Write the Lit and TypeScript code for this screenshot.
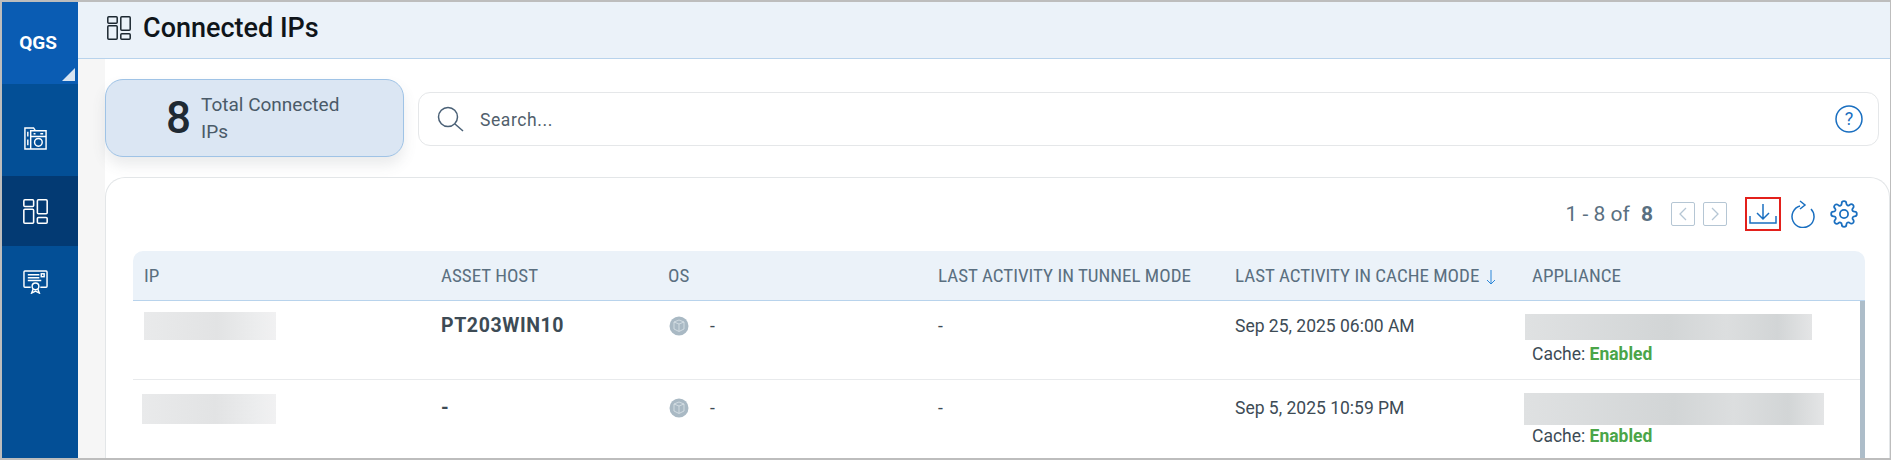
import { LitElement, html, css, svg } from 'lit';
import { customElement } from 'lit/decorators.js';

const dashIcon = svg`
  <rect x="0.8" y="0.8" width="9.4" height="6.4" rx="1" />
  <rect x="0.8" y="9.8" width="9.4" height="13.4" rx="1" />
  <rect x="13.8" y="0.8" width="9.4" height="13.4" rx="1" />
  <rect x="13.8" y="17.8" width="9.4" height="5.4" rx="1" />
`;

const rows = [
  { pad: 13, ipW: 132, ipL: 0, ipH: 28, host: 'PT203WIN10', date: 'Sep 25, 2025 06:00 AM', appW: 287, appL: 0, appH: 26, appT: 0, cacheT: 2 },
  { pad: 16, ipW: 134, ipL: -2, ipH: 30, host: '-', date: 'Sep 5, 2025 10:59 PM', appW: 300, appL: -1, appH: 32, appT: -3, cacheT: -1 },
];

@customElement('app-root')
export class AppRoot extends LitElement {
  static styles = css`
    :host {
      display: block;
      width: 1891px;
      height: 460px;
      font-family: Roboto, 'Liberation Sans', sans-serif;
      color: #3d4b55;
    }

    .frame {
      box-sizing: border-box;
      width: 100%;
      height: 100%;
      display: flex;
      overflow: hidden;
      border: solid #bdbdbd;
      border-width: 2px 1px 2px 2px;
      background: #fff;
    }

    .side {
      flex: 0 0 76px;
      background: #034f96;
      display: flex;
      flex-direction: column;
    }

    .brand {
      position: relative;
      height: 82px;
      background: #0a5cb3;
      color: #fff;
      font-weight: 700;
      font-size: 19px;
      display: flex;
      align-items: center;
      justify-content: center;
      box-sizing: border-box;
      padding: 0 4px 2px 0;
    }

    .brand::after {
      content: '';
      position: absolute;
      right: 3px;
      bottom: 3px;
      border-style: solid;
      border-width: 0 0 13px 13px;
      border-color: transparent transparent #d7e4f2 transparent;
    }

    .nav {
      box-sizing: border-box;
      height: 70px;
      display: flex;
      align-items: center;
      justify-content: center;
      padding-right: 10px;
    }

    .nav.first {
      height: 92px;
      padding-top: 16px;
    }

    .nav.active {
      background: #033a73;
    }

    .nav svg {
      width: 25px;
      height: 25px;
      fill: none;
      stroke: #fff;
      stroke-width: 1.5;
    }

    .main {
      flex: 1;
      min-width: 0;
      display: flex;
      flex-direction: column;
    }

    .top {
      flex: 0 0 57px;
      display: flex;
      align-items: center;
      gap: 12px;
      padding: 0 0 4px 29px;
      box-sizing: border-box;
      background: #ebf2f9;
      border-bottom: 1px solid #b8d3ec;
    }

    .top svg {
      width: 24px;
      height: 24px;
      fill: none;
      stroke: #1c2730;
      stroke-width: 1.5;
    }

    .top h1 {
      margin: 0;
      font-size: 27px;
      font-weight: 500;
      color: #0f151a;
    }

    .body {
      flex: 1;
      min-height: 0;
      display: flex;
    }

    .gutter {
      flex: 0 0 27px;
      background: #f6f6f6;
    }

    .content {
      flex: 1;
      min-width: 0;
      padding-top: 20px;
      display: flex;
      flex-direction: column;
    }

    .summary {
      display: flex;
      align-items: center;
      gap: 14px;
      padding-right: 11px;
    }

    .stat {
      box-sizing: border-box;
      flex: 0 0 299px;
      height: 78px;
      display: flex;
      align-items: center;
      gap: 10px;
      padding-left: 60px;
      background: #dbe6f3;
      border: 1px solid #9fc3e6;
      border-radius: 18px;
      box-shadow: 0 8px 14px rgba(80, 90, 100, 0.12);
    }

    .stat b {
      font-size: 44px;
      font-weight: 500;
      color: #1f2a33;
    }

    .stat span {
      font-size: 19px;
      line-height: 27px;
      color: #4a5a68;
      width: 150px;
    }

    .search {
      box-sizing: border-box;
      flex: 1;
      height: 54px;
      margin-top: 1px;
      display: flex;
      align-items: center;
      padding: 0 15px 0 18px;
      border: 1px solid #e5e7e9;
      border-radius: 12px;
    }

    .search svg {
      flex: none;
      fill: none;
      stroke: #4a6076;
      stroke-width: 1.5;
    }

    .search .ph {
      flex: 1;
      margin: 2px 0 0 15px;
      font-size: 17.5px;
      letter-spacing: 0.6px;
      color: #51606c;
    }

    .search .help {
      stroke: #1a6fc0;
    }

    .help text {
      fill: #1a6fc0;
      stroke: none;
      font: 400 18px Roboto, sans-serif;
    }

    .card {
      flex: 1;
      min-height: 0;
      margin-top: 20px;
      padding: 19px 24px 0 27px;
      border: solid #e3e6e8;
      border-width: 1px 1px 0 1px;
      border-radius: 20px 20px 0 0;
      overflow: hidden;
    }

    .tools {
      height: 34px;
      display: flex;
      align-items: center;
      justify-content: flex-end;
      margin-bottom: 20px;
      color: #5a7081;
      font-size: 21px;
    }

    .count b {
      margin-left: 6px;
      font-weight: 700;
    }

    .page {
      box-sizing: border-box;
      width: 24px;
      height: 24px;
      margin-left: 8px;
      border: 1.5px solid #b5c6d4;
      border-radius: 2px;
      display: flex;
      align-items: center;
      justify-content: center;
    }

    .page svg {
      fill: none;
      stroke: #b5c6d4;
      stroke-width: 1.3;
    }

    .page.prev {
      margin-left: 18px;
    }

    .export {
      box-sizing: border-box;
      width: 36px;
      height: 34px;
      margin-left: 18px;
      border: 2px solid #e3201b;
      display: flex;
      align-items: center;
      justify-content: center;
    }

    .tools svg.line {
      fill: none;
      stroke: #1a6fc0;
      stroke-width: 1.5;
    }

    .reload {
      margin-left: 10px;
    }

    .gear {
      margin: 0 7px 0 15px;
    }

    .row {
      display: grid;
      grid-template-columns: 297px 227px 270px 297px 297px 1fr;
    }

    .row > div {
      padding-left: 11px;
    }

    .head {
      height: 49px;
      align-items: center;
      background: #ebf2f9;
      border-bottom: 1px solid #b8d3ec;
      border-radius: 10px 10px 0 0;
    }

    .head > div {
      font-family: 'Liberation Sans Narrow', 'Roboto Condensed', Roboto, sans-serif;
      font-size: 19px;
      color: #5a6f80;
      white-space: nowrap;
    }

    .head .arrow {
      margin-left: 7px;
      vertical-align: -3px;
      fill: none;
      stroke: #2b86d8;
      stroke-width: 1;
    }

    .rows {
      position: relative;
    }

    .rows::after {
      content: '';
      position: absolute;
      top: 0;
      right: 0;
      bottom: 0;
      width: 5px;
      background: #adbdc9;
    }

    .data {
      height: 78px;
      border-bottom: 1px solid #e8eaec;
      font-size: 17.5px;
      line-height: 24px;
      color: #3d4b55;
    }

    .host {
      font-size: 19.5px;
      font-weight: 700;
      letter-spacing: 0.6px;
    }

    .row > .os {
      display: flex;
      align-items: flex-start;
      gap: 21px;
      padding-left: 12px;
    }

    .os svg {
      margin-top: 2px;
      flex: none;
    }

    .row > .appliance {
      padding-left: 4px;
    }

    .masked {
      background: linear-gradient(90deg, #e9eaeb, #e2e3e4 55%, #ecedee 85%, #f1f1f2);
      filter: blur(0.6px);
    }

    .masked.ip {
      margin-top: -2px;
    }

    .masked.app {
      background: linear-gradient(90deg, #dfe1e2, #d2d5d6 50%, #dcdedf 70%, #d2d5d6 88%, #e4e5e6);
    }

    .cache {
      padding-left: 7px;
      font-size: 17.5px;
      line-height: 24px;
    }

    .cache b {
      color: #4aa548;
      font-weight: 700;
    }
  `;

  render() {
    return html`
      <div class="frame">
        <nav class="side">
          <div class="brand">QGS</div>
          <div class="nav first">
            <svg viewBox="0 0 26 26">
              <path d="M2 6V2h9l2 3M2 2v22h22V5H8v19" />
              <path d="M5 6v5M5 14v6M11 8h2M18 8h3M8 11h16" />
              <circle cx="16" cy="17" r="4" />
            </svg>
          </div>
          <div class="nav active">
            <svg viewBox="0 0 24 24">${dashIcon}</svg>
          </div>
          <div class="nav">
            <svg viewBox="0 0 26 26">
              <path d="M8 19H2a1 1 0 0 1-1-1V3a1 1 0 0 1 1-1h22a1 1 0 0 1 1 1v15a1 1 0 0 1-1 1h-6" />
              <path d="M5 6h12M5 9h12M5 12h14" />
              <rect x="19" y="5" width="3" height="3" />
              <circle cx="13" cy="18" r="3.5" />
              <path d="M10.500 21l-1.500 4 4-2 4 2-1.500-4" />
            </svg>
          </div>
        </nav>
        <div class="main">
          <header class="top">
            <svg viewBox="0 0 24 24">${dashIcon}</svg>
            <h1>Connected IPs</h1>
          </header>
          <div class="body">
            <div class="gutter"></div>
            <div class="content">
              <div class="summary">
                <div class="stat"><b>8</b><span>Total Connected IPs</span></div>
                <div class="search">
                  <svg width="28" height="26" viewBox="0 0 28 26">
                    <circle cx="11" cy="11" r="9.500" />
                    <path d="M18 18l8 7" />
                  </svg>
                  <span class="ph">Search...</span>
                  <svg class="help" width="28" height="28" viewBox="0 0 28 28">
                    <circle cx="14" cy="14" r="13" />
                    <text x="14" y="20" text-anchor="middle">?</text>
                  </svg>
                </div>
              </div>
              <section class="card">
                <div class="tools">
                  <span class="count">1 - 8 of <b>8</b></span>
                  <span class="page prev">
                    <svg width="10" height="16" viewBox="0 0 10 16"><path d="M8 2L2 8l6 6" /></svg>
                  </span>
                  <span class="page">
                    <svg width="10" height="16" viewBox="0 0 10 16"><path d="M2 2l6 6-6 6" /></svg>
                  </span>
                  <span class="export">
                    <svg class="line" width="28" height="26" viewBox="0 0 28 26">
                      <path d="M14 3v15M8 12l6 6 6-6" />
                      <path d="M1 15v7h26v-7" />
                    </svg>
                  </span>
                  <svg class="line reload" width="24" height="28" viewBox="0 0 24 28">
                    <path d="M9 6a11 11 0 1 0 11 3" />
                    <path d="M9 1l5 4-5 4" />
                  </svg>
                  <svg class="line gear" width="28" height="28" viewBox="0 0 24 24">
                    <circle cx="12" cy="12" r="3.500" />
                    <path
                      d="M19.400 15a1.650 1.650 0 0 0 .33 1.820l.06.06a2 2 0 1 1-2.830 2.830l-.06-.06a1.650 1.650 0 0 0-2.820 1.170V21a2 2 0 0 1-4 0v-.09a1.650 1.650 0 0 0-2.820-1.170l-.06.06a2 2 0 1 1-2.830-2.830l.06-.06A1.650 1.650 0 0 0 3.260 14H3a2 2 0 0 1 0-4h.09a1.650 1.650 0 0 0 1.170-2.820l-.06-.06a2 2 0 1 1 2.830-2.830l.06.06A1.650 1.650 0 0 0 10 3.260V3a2 2 0 0 1 4 0v.09a1.650 1.650 0 0 0 2.820 1.170l.06-.06a2 2 0 1 1 2.830 2.830l-.06.06A1.650 1.650 0 0 0 20.740 10H21a2 2 0 0 1 0 4h-.09a1.650 1.650 0 0 0-1.510 1z"
                    />
                  </svg>
                </div>
                <div class="row head">
                  <div>IP</div>
                  <div>ASSET HOST</div>
                  <div>OS</div>
                  <div>LAST ACTIVITY IN TUNNEL MODE</div>
                  <div>
                    LAST ACTIVITY IN CACHE MODE<svg class="arrow" width="10" height="16" viewBox="0 0 10 16">
                      <path d="M5 1v14M1 11l4 4 4-4" />
                    </svg>
                  </div>
                  <div>APPLIANCE</div>
                </div>
                <div class="rows">
                  ${rows.map(
                    (r) => html`
                      <div class="row data">
                        <div style="padding-top:${r.pad}px">
                          <div class="masked ip" style="width:${r.ipW}px;height:${r.ipH}px;margin-left:${r.ipL}px"></div>
                        </div>
                        <div class="host" style="padding-top:${r.pad}px">${r.host}</div>
                        <div class="os" style="padding-top:${r.pad}px">
                          <svg width="20" height="20" viewBox="0 0 20 20">
                            <circle cx="10" cy="10" r="9.500" fill="#a9b9c4" />
                            <path
                              d="M10 4l5 2v7l-5 2.500L5 13V6zM5 6l5 2 5-2M10 8v7"
                              fill="none"
                              stroke="#dbe3e8"
                              stroke-width="0.8"
                            />
                          </svg>
                          <span>-</span>
                        </div>
                        <div style="padding-top:${r.pad}px">-</div>
                        <div style="padding-top:${r.pad}px">${r.date}</div>
                        <div class="appliance" style="padding-top:${r.pad}px">
                          <div
                            class="masked app"
                            style="width:${r.appW}px;height:${r.appH}px;margin-left:${r.appL}px;margin-top:${r.appT}px"
                          ></div>
                          <div class="cache" style="margin-top:${r.cacheT}px">Cache: <b>Enabled</b></div>
                        </div>
                      </div>
                    `
                  )}
                </div>
              </section>
            </div>
          </div>
        </div>
      </div>
    `;
  }
}
